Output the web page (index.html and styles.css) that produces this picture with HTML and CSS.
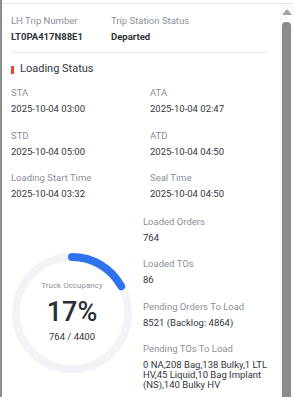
FILE: index.html
```html
<!DOCTYPE html>
<html>
<head>
<meta charset="utf-8">
<link rel="stylesheet" href="styles.css">
</head>
<body>
<div class="frame">
  <div class="content">
    <div class="info-grid">
      <div class="field">
        <div class="label">LH Trip Number</div>
        <div class="value strong">LT0PA417N88E1</div>
      </div>
      <div class="field">
        <div class="label">Trip Station Status</div>
        <div class="value strong">Departed</div>
      </div>
    </div>
    <div class="divider"></div>
    <div class="section-title"><span class="mark"></span>Loading Status</div>
    <div class="time-grid">
      <div class="field"><div class="label">STA</div><div class="value">2025-10-04 03:00</div></div>
      <div class="field"><div class="label">ATA</div><div class="value">2025-10-04 02:47</div></div>
      <div class="field"><div class="label">STD</div><div class="value">2025-10-04 05:00</div></div>
      <div class="field"><div class="label">ATD</div><div class="value">2025-10-04 04:50</div></div>
      <div class="field"><div class="label">Loading Start Time</div><div class="value">2025-10-04 03:32</div></div>
      <div class="field"><div class="label">Seal Time</div><div class="value">2025-10-04 04:50</div></div>
    </div>
    <div class="stats">
      <div class="gauge">
        <svg class="ring" width="122" height="122" viewBox="0 0 122 122">
          <circle cx="61" cy="61" r="56" fill="none" stroke="#f1f3f7" stroke-width="8"/>
          <circle cx="61" cy="61" r="56" fill="none" stroke="#2f72ee" stroke-width="8" stroke-linecap="round"
            stroke-dasharray="59.8 400" transform="rotate(-90 61 61)"/>
        </svg>
        <div class="gauge-text">
          <div class="g-label">Truck Occupancy</div>
          <div class="g-pct">17%</div>
          <div class="g-sub">764 / 4400</div>
        </div>
      </div>
      <div class="stat-list">
        <div class="field"><div class="label">Loaded Orders</div><div class="value">764</div></div>
        <div class="field"><div class="label">Loaded TOs</div><div class="value">86</div></div>
        <div class="field"><div class="label">Pending Orders To Load</div><div class="value">8521 (Backlog: 4864)</div></div>
        <div class="field"><div class="label">Pending TOs To Load</div><div class="value multi">0 NA,208 Bag,138 Bulky,1 LTL HV,45 Liquid,10 Bag Implant (NS),140 Bulky HV</div></div>
      </div>
    </div>
  </div>
  <div class="scrollbar">
    <div class="arrow"></div>
    <div class="thumb"></div>
  </div>
</div>
</body>
</html>
```

FILE: styles.css
```css
html, body {
  margin: 0;
  padding: 0;
  background: #fff;
}
body {
  height: 397px;
  box-sizing: border-box;
  border-left: 2px solid #8c8c8c;
  padding-top: 3px;
  overflow: hidden;
  font-family: Roboto, "Liberation Sans", sans-serif;
  color: #33363b;
}
.frame {
  display: flex;
  border-top: 1px solid #e6e6e6;
  height: 393px;
}
.content {
  flex: 1;
  padding: 10px 12px 0 9px;
  min-width: 0;
}
.info-grid {
  display: grid;
  grid-template-columns: 100px 1fr;
}
.label {
  font-size: 9.5px;
  line-height: 13px;
  color: #8b8f98;
  white-space: nowrap;
}
.value {
  font-size: 9.5px;
  line-height: 13px;
  margin-top: 3px;
  color: #33363b;
}
.value.strong {
  font-weight: 700;
}
.value.multi {
  line-height: 10px;
  margin-top: 5px;
}
.divider {
  height: 1px;
  background: #e9ebef;
  margin-top: 9px;
}
.section-title {
  margin-top: 9px;
  font-size: 11px;
  line-height: 14px;
  display: flex;
  align-items: center;
  color: #33363b;
}
.mark {
  width: 3px;
  height: 8px;
  background: #e8472f;
  margin-right: 6px;
  margin-top: 1px;
}
.time-grid {
  margin-top: 10px;
  display: grid;
  grid-template-columns: 139px 1fr;
  row-gap: 13.5px;
}
.stats {
  margin-top: 15px;
  display: grid;
  grid-template-columns: 132px 1fr;
}
.gauge {
  display: grid;
  width: 122px;
  height: 122px;
  margin-top: 37px;
  margin-left: 0;
}
.ring, .gauge-text {
  grid-area: 1 / 1;
}
.gauge-text {
  display: flex;
  flex-direction: column;
  align-items: center;
  padding-top: 28.5px;
}
.g-label {
  font-size: 8px;
  line-height: 10px;
  color: #8b8f98;
}
.g-pct {
  font-size: 27px;
  line-height: 30px;
  font-weight: 500;
  color: #2b2f36;
  margin-top: 6px;
}
.g-sub {
  font-size: 9.5px;
  line-height: 13px;
  margin-top: 3px;
  color: #33363b;
}
.stat-list {
  display: flex;
  flex-direction: column;
  gap: 13.3px;
}
.scrollbar {
  width: 13px;
  display: flex;
  flex-direction: column;
  align-items: center;
  background: #fafafa;
}
.arrow {
  width: 0;
  height: 0;
  border-left: 5px solid transparent;
  border-right: 5px solid transparent;
  border-bottom: 6px solid #a3a3a3;
  margin-top: 5px;
}
.thumb {
  width: 9px;
  flex: 1;
  margin-top: 7px;
  background: #8c8c8c;
  border-radius: 4px 4px 0 0;
}
```
